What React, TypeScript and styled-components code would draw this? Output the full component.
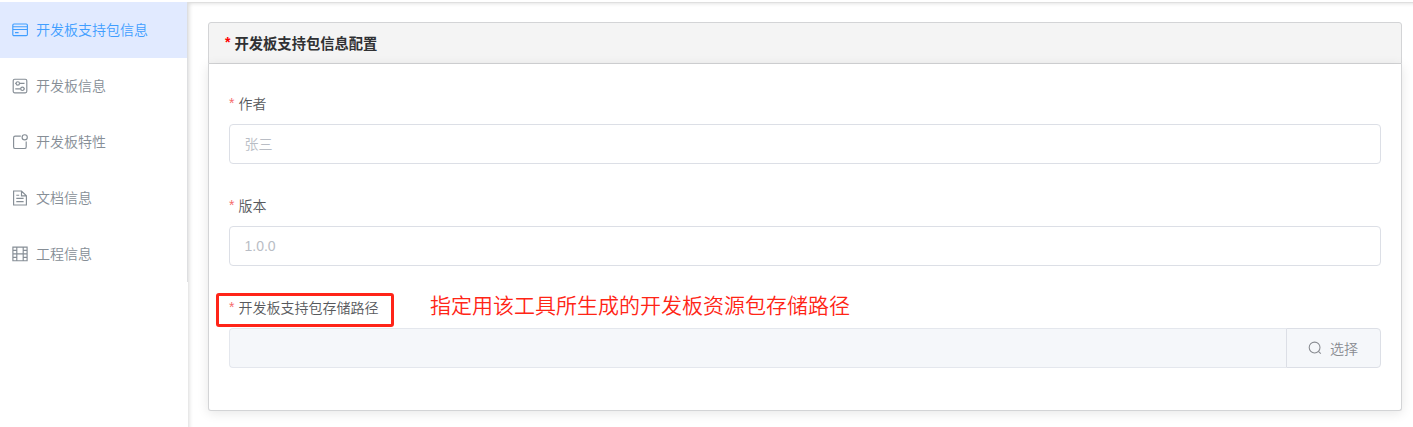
import React from 'react';
import styled, { createGlobalStyle } from 'styled-components';

const GlobalStyle = createGlobalStyle`
  *, *::before, *::after { box-sizing: border-box; }
  body {
    margin: 0;
    background: #fff;
    font-family: "Liberation Sans", "Noto Sans CJK SC", sans-serif;
    font-size: 14px;
    font-weight: 350;
    overflow: hidden;
  }
`;

const Page = styled.div`
  display: flex;
  align-items: flex-start;
  height: 427px;
  padding-top: 2px;
`;

const Sidebar = styled.nav`
  width: 188px;
  height: 280px;
  flex: none;
  border-right: 1px solid #dedfe1;
`;

const MenuItem = styled.a<{ $active?: boolean }>`
  display: flex;
  align-items: center;
  height: 56px;
  padding-left: 12px;
  gap: 8px;
  line-height: 56px;
  color: ${(p) => (p.$active ? '#409eff' : '#868e96')};
  background: ${(p) => (p.$active ? '#e1eaff' : 'transparent')};
`;

const MenuIcon = styled.svg`
  width: 16px;
  height: 16px;
  flex: none;
  fill: none;
  stroke: currentColor;
  stroke-width: 1.15;
  position: relative;
  top: -0.5px;
`;

const Main = styled.main`
  flex: 1;
  height: 440px;
  padding: 20px 15px 0 20px;
  margin-right: -4px;
  box-shadow: inset 0 1px 0 #dfdfdf, inset 1px 1px 4px rgba(0, 0, 0, 0.16);
`;

const Card = styled.section`
  border-radius: 3px;
`;

const CardHeader = styled.header`
  display: flex;
  align-items: center;
  gap: 4px;
  height: 42px;
  padding: 0 0 2px 16px;
  border: 1px solid #d3d4d6;
  border-radius: 3px 3px 0 0;
  background: #f4f4f4;
  color: #303133;
  font-weight: 700;
  font-size: 14.3px;
`;

const CardBody = styled.div`
  height: 347px;
  padding: 20px 20px 0;
  border: 1px solid #d3d4d6;
  border-top: 0;
  border-radius: 0 0 3px 3px;
  background: #fff;
  box-shadow: 0 2px 12px rgba(0, 0, 0, 0.1);
`;

const Field = styled.div`
  margin-bottom: 22px;
`;

const LabelRow = styled.div`
  position: relative;
  display: flex;
  align-items: center;
  gap: 4px;
  height: 40px;
  padding-bottom: 2px;
  color: #57595d;
`;

const Asterisk = styled.span<{ $strong?: boolean }>`
  color: ${(p) => (p.$strong ? '#ff0000' : '#f56c6c')};
  font-size: 14px;
  line-height: 16px;
`;

const Input = styled.input`
  display: block;
  width: 100%;
  height: 40px;
  padding: 0 14.5px;
  border: 1px solid #dcdfe6;
  border-radius: 4px;
  background: #fff;
  font: inherit;
  outline: none;
  &::placeholder { color: #b9bdc5; opacity: 1; }
`;

const InputGroup = styled.div`
  display: flex;
  height: 40px;
`;

const PathInput = styled(Input)`
  flex: 1;
  border-color: #e4e7ed;
  border-right: 0;
  border-radius: 4px 0 0 4px;
  background: #f5f7fa;
`;

const SelectButton = styled.button`
  display: flex;
  align-items: center;
  width: 95px;
  height: 40px;
  padding: 0 0 1px 21px;
  gap: 8px;
  border: 1px solid #dcdfe6;
  border-radius: 0 4px 4px 0;
  background: #f5f7fa;
  color: #888b91;
  font: inherit;
`;

const Highlight = styled.span`
  position: absolute;
  left: -13px;
  top: 5px;
  width: 178px;
  height: 34px;
  border: 3px solid #ff2418;
  border-radius: 3px;
`;

const Note = styled.span`
  position: absolute;
  left: 201px;
  top: 3px;
  color: #ff2516;
  font-size: 21px;
  line-height: 30px;
  white-space: nowrap;
`;

const CardIcon = () => (
  <MenuIcon viewBox="0 0 16 16">
    <rect x="0.8" y="2" width="14.6" height="11.6" rx="1.2" />
    <path d="M1 4.7h14M1 7.5h14M3 10.6h3.6" />
  </MenuIcon>
);

const OperationIcon = () => (
  <MenuIcon viewBox="0 0 16 16">
    <rect x="1.2" y="1.2" width="13.6" height="13.6" rx="1.5" />
    <circle cx="5.8" cy="5.4" r="1.7" />
    <circle cx="10.4" cy="10.8" r="1.7" />
    <path d="M7.5 5.4h5M3.3 10.8h5.4M3.2 5.4h.9M12.1 10.8h.8" />
  </MenuIcon>
);

const BadgeIcon = () => (
  <MenuIcon viewBox="0 0 16 16">
    <path d="M8.8 2.1H3.2A1.6 1.6 0 0 0 1.6 3.7v9.2a1.6 1.6 0 0 0 1.6 1.6h9.4a1.6 1.6 0 0 0 1.6-1.6V7.6" />
    <circle cx="12.7" cy="3.3" r="2.6" />
  </MenuIcon>
);

const DocumentIcon = () => (
  <MenuIcon viewBox="0 0 16 16">
    <path d="M9.5 1H1.6v14h12.8V5.8zM9.5 1v4.8h4.9M4.3 5.2h2.9M4.3 8.4h7.3M4.3 11.6h7.3" />
  </MenuIcon>
);

const FilmIcon = () => (
  <MenuIcon viewBox="0 0 16 16">
    <path d="M.9 1.1h14.2v13.6H.9zM4.8 1v14M11.2 1v14M4.8 7.9h6.4M1 4.4h3.8M1 7.9h3.8M1 11.3h3.8M11.2 4.4H15M11.2 7.9H15M11.2 11.3H15" />
  </MenuIcon>
);

const SearchIcon = () => (
  <svg width="14" height="14" viewBox="0 0 14 14" fill="none" stroke="currentColor" strokeWidth="1.05">
    <circle cx="6.6" cy="6.5" r="5.4" />
    <path d="M10.4 10.3l2.4 2.4" />
  </svg>
);

const menu = [
  { text: '开发板支持包信息', Icon: CardIcon },
  { text: '开发板信息', Icon: OperationIcon },
  { text: '开发板特性', Icon: BadgeIcon },
  { text: '文档信息', Icon: DocumentIcon },
  { text: '工程信息', Icon: FilmIcon },
];

export default function App() {
  return (
    <>
      <GlobalStyle />
      <Page>
        <Sidebar>
          {menu.map(({ text, Icon }, i) => (
            <MenuItem key={text} $active={i === 0}>
              <Icon />
              {text}
            </MenuItem>
          ))}
        </Sidebar>
        <Main>
          <Card>
            <CardHeader>
              <Asterisk $strong>*</Asterisk>
              开发板支持包信息配置
            </CardHeader>
            <CardBody>
              <Field>
                <LabelRow><Asterisk>*</Asterisk>作者</LabelRow>
                <Input placeholder="张三" />
              </Field>
              <Field>
                <LabelRow><Asterisk>*</Asterisk>版本</LabelRow>
                <Input placeholder="1.0.0" />
              </Field>
              <Field>
                <LabelRow>
                  <Asterisk>*</Asterisk>开发板支持包存储路径
                  <Highlight />
                  <Note>指定用该工具所生成的开发板资源包存储路径</Note>
                </LabelRow>
                <InputGroup>
                  <PathInput disabled />
                  <SelectButton><SearchIcon />选择</SelectButton>
                </InputGroup>
              </Field>
            </CardBody>
          </Card>
        </Main>
      </Page>
    </>
  );
}
